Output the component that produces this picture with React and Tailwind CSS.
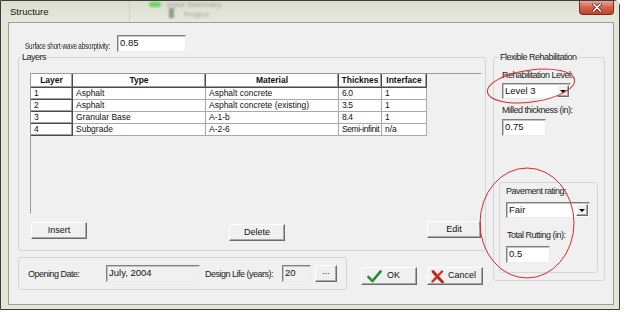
import React from "react";

const sunken = "border border-[#ececec] border-t-[#7f7f7f] border-l-[#7f7f7f] shadow-[inset_1px_1px_0_#c4c4c4]";
const raised = "border border-white border-b-[#6b6b6b] border-r-[#6b6b6b] shadow-[inset_-1px_-1px_0_#a8a8a8] bg-[#f0f0f0]";
const label = "text-[9px] leading-[10px] tracking-[-0.5px] text-[#222] whitespace-nowrap";

const layers = [
  ["1", "Asphalt", "Asphalt concrete", "6.0", "1"],
  ["2", "Asphalt", "Asphalt concrete (existing)", "3.5", "1"],
  ["3", "Granular Base", "A-1-b", "8.4", "1"],
  ["4", "Subgrade", "A-2-6", "Semi-infinit", "n/a"],
];
const cols = ["w-[42px]", "w-[133px]", "w-[133px]", "w-[43px]", "w-[45px]"];
const heads = ["Layer", "Type", "Material", "Thicknes", "Interface"];

function Field({ value, className, gray }) {
  return (
    <div className={"flex items-center pl-[2px] text-[9.5px] text-[#111] " + sunken + " " + (gray ? "bg-[#f0f0f0] " : "bg-white ") + className}>
      {value}
    </div>
  );
}

function Combo({ value, className }) {
  return (
    <div className={"flex items-center bg-white " + sunken + " " + className}>
      <span className="pl-[2px] text-[9.5px] text-[#111]">{value}</span>
      <div className={"ml-auto mr-[1px] w-[12px] h-[12px] flex items-center justify-center " + raised}>
        <div className="w-0 h-0 border-l-[3px] border-r-[3px] border-t-[3px] border-l-transparent border-r-transparent border-t-black" />
      </div>
    </div>
  );
}

function Btn({ children, className }) {
  return (
    <div className={"flex items-center justify-center text-[9px] text-[#111] " + raised + " " + className}>
      {children}
    </div>
  );
}

function Check() {
  return (
    <svg width="15" height="13" viewBox="0 0 15 13">
      <path d="M1.5 7 L5.5 11 L13.5 1.5" fill="none" stroke="#1f8a2a" strokeWidth="2.6" strokeLinecap="round" strokeLinejoin="round" />
      <path d="M2 6.5 L5.5 10" fill="none" stroke="#59c24f" strokeWidth="1" strokeLinecap="round" />
    </svg>
  );
}

function Cross() {
  return (
    <svg width="13" height="13" viewBox="0 0 13 13">
      <path d="M2 1.5 C5 5 8 8.5 11.5 12" fill="none" stroke="#c3201a" strokeWidth="2.8" strokeLinecap="round" />
      <path d="M11 1.5 C8 4.5 5 8 1.5 11.5" fill="none" stroke="#d22a1e" strokeWidth="2.4" strokeLinecap="round" />
    </svg>
  );
}

export default function App() {
  return (
    <div className="relative w-[625px] h-[312px] bg-white overflow-hidden font-['Liberation_Sans',Arial,sans-serif]">
      <div className="flex flex-col w-[620px] h-[310px] bg-[#e3e5d8] border border-[#3c3c3c] rounded-tr-[6px]">
        {/* title bar */}
        <div className="relative flex items-start h-[21px] bg-gradient-to-b from-[#dcdfcf] to-[#e6e8dc]">
          <div className="absolute left-[128px] top-0 w-[1px] h-[21px] bg-[#cfd1c3]" />
          <div className="absolute left-[148px] top-[1px] w-[12px] h-[5px] rounded-full bg-[#6ad35a] blur-[1px]" />
          <div className="absolute left-[166px] top-[-2px] text-[8px] text-[#9a9c90] blur-[1px]">Input Summary</div>
          <div className="absolute left-[168px] top-[7px] w-[5px] h-[10px] bg-[#8f998a] blur-[1px]" />
          <div className="absolute left-[183px] top-[8px] text-[8px] text-[#a0a296] blur-[1px]">Project</div>
          <span className="relative ml-[9px] mt-[5px] text-[9.5px] leading-[11px] text-[#111]">Structure</span>
          <div className="relative ml-auto mr-[5px] w-[35px] h-[14px] rounded-b-[4px] border border-t-0 border-[#7d2b20] bg-gradient-to-b from-[#e7a796] via-[#d4604a] to-[#c2412b] flex items-center justify-center">
            <svg width="10" height="9" viewBox="0 0 10 9">
              <path d="M1.5 1 L8.5 8 M8.5 1 L1.5 8" stroke="#5a1a12" strokeWidth="3" strokeLinecap="round" />
              <path d="M1.5 1 L8.5 8 M8.5 1 L1.5 8" stroke="#fff" strokeWidth="1.7" strokeLinecap="round" />
            </svg>
          </div>
        </div>

        {/* client area */}
        <div className="flex-1 ml-[7px] mr-[5px] mb-[4px] bg-[#f0f0f0] border border-[#9b9d94]">
          <div className="flex items-center h-[17px] mt-[12px] ml-[16px]">
            <div className="w-[92px] flex-none">
              <span className="inline-block origin-left scale-x-[0.7] text-[9px] leading-[10px] tracking-[-0.2px] text-[#222] whitespace-nowrap">Surface short-wave absorptivity:</span>
            </div>
            <Field value="0.85" className="w-[69px] h-[17px]" />
          </div>

          <div className="flex ml-[9px]">
            {/* left column */}
            <div className="flex flex-col w-[468px]">
              <fieldset className="w-[468px] h-[199px] border border-[#d3d6d8] rounded-[3px] min-w-0">
                <legend className={"ml-[2px] px-[1px] " + label}>Layers</legend>
                <div className="ml-[11px] mt-[11px] w-[452px] h-[141px] border border-[#f4f4f4] border-t-[#9a9a9a] border-l-[#9a9a9a]">
                  <div className="flex h-[14px]">
                    {heads.map((h, i) => (
                      <div key={h} className={cols[i] + " flex items-center justify-center bg-white border-r border-b border-[#4a4a4a] shadow-[inset_-1px_-1px_0_#a0a0a0] text-[8.5px] font-bold text-[#111]"}>{h}</div>
                    ))}
                  </div>
                  {layers.map((r) => (
                    <div key={r[0]} className="flex h-[12px]">
                      {r.map((c, i) => (
                        <div key={i} className={cols[i] + " flex items-center overflow-hidden whitespace-nowrap bg-white pl-[3px] text-[8.5px] text-[#111] border-r border-b " + (i === 0 ? "border-[#4a4a4a] shadow-[inset_-1px_-1px_0_#a0a0a0]" : "border-[#a9a9a9]") + (i === 3 ? " tracking-[-0.4px]" : "")}>{c}</div>
                      ))}
                    </div>
                  ))}
                </div>
                <div className="flex items-start mt-[7px] ml-[11px]">
                  <Btn className="ml-[1px] mt-[1px] w-[56px] h-[17px]">Insert</Btn>
                  <Btn className="ml-[142px] mt-[3px] w-[56px] h-[17px]">Delete</Btn>
                  <Btn className="ml-[142px] w-[54px] h-[17px]">Edit</Btn>
                </div>
              </fieldset>

              <div className="flex items-start mt-[6px]">
                <div className="flex items-center w-[329px] h-[33px] pl-[9px] border border-[#d3d6d8] rounded-[3px]">
                  <span className={"w-[78px] " + label}>Opening Date:</span>
                  <Field value="July, 2004" gray className="w-[94px] h-[17px]" />
                  <span className={"ml-[5px] w-[77px] " + label}>Design Life (years):</span>
                  <Field value="20" gray className="w-[29px] h-[17px]" />
                  <Btn className="ml-[4px] w-[22px] h-[17px] text-[8px] pb-[3px]">...</Btn>
                </div>
                <Btn className="ml-[14px] mt-[10px] w-[56px] h-[18px] !justify-start pl-[5px] gap-[5px]">
                  <Check />
                  <span>OK</span>
                </Btn>
                <Btn className="ml-[10px] mt-[10px] w-[56px] h-[18px] !justify-start pl-[3px] gap-[4px]">
                  <Cross />
                  <span>Cancel</span>
                </Btn>
              </div>
            </div>

            {/* right column */}
            <fieldset className="ml-[7px] w-[112px] h-[229px] border border-[#d3d6d8] rounded-[3px] min-w-0">
              <legend className={"ml-[5px] px-[1px] " + label}>Flexible Rehabilitation</legend>
              <div className={"ml-[8px] mt-[8px] " + label}>Rehabilitation Level:</div>
              <Combo value="Level 3" className="ml-[8px] mt-[3px] w-[69px] h-[16px]" />
              <div className={"ml-[8px] mt-[6px] " + label}>Milled thickness (in):</div>
              <Field value="0.75" className="ml-[8px] mt-[4px] w-[44px] h-[17px]" />
              <div className="ml-[5px] mt-[46px] w-[99px] h-[91px] border border-[#d3d6d8] rounded-[3px] flex flex-col">
                <div className={"ml-[6px] mt-[3px] " + label}>Pavement rating:</div>
                <Combo value="Fair" className="ml-[6px] mt-[6px] w-[84px] h-[16px]" />
                <div className={"ml-[7px] mt-[12px] " + label}>Total Rutting (in):</div>
                <Field value="0.5" className="ml-[6px] mt-[6px] w-[44px] h-[17px]" />
              </div>
            </fieldset>
          </div>
        </div>
      </div>

      {/* red annotation circles */}
      <svg className="absolute left-0 top-0 pointer-events-none" width="625" height="312">
        <ellipse cx="531" cy="86" rx="44" ry="16" transform="rotate(-8 531 86)" fill="none" stroke="#e3262b" strokeWidth="1" />
        <ellipse cx="527" cy="223" rx="47" ry="55" fill="none" stroke="#e3262b" strokeWidth="1" />
      </svg>
    </div>
  );
}
